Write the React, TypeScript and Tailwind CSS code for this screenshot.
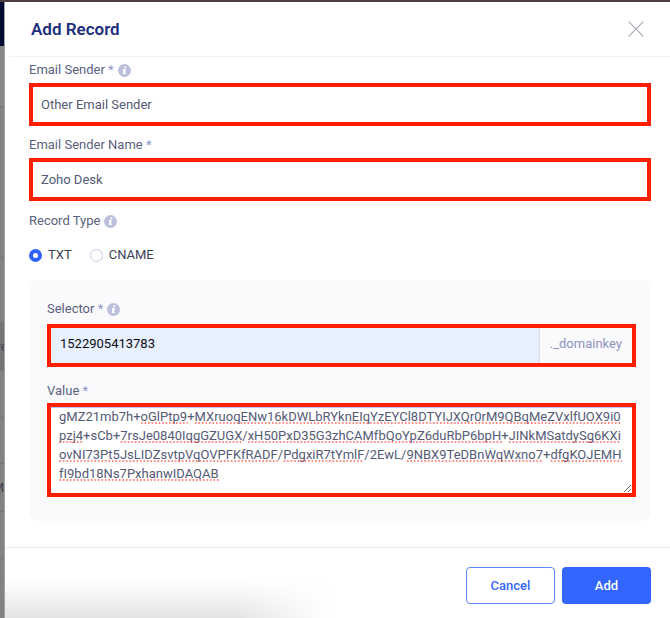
import { useEffect, useState } from "react";
import type { ReactNode } from "react";

const FONT = "13px Roboto, sans-serif";
const LINE_HEIGHT = 19;
const MARK_OFFSET = 16;

type Chunk = { text: string; flagged: boolean };

const ok = (text: string): Chunk => ({ text, flagged: false });
const bad = (text: string): Chunk => ({ text, flagged: true });

const KEY_LINES: Chunk[][] = [
  [ok("gMZ21mb7h+"), bad("oGlPtp9"), ok("+"), bad("MXruoqENw16kDWLbRYknEIqYzEYCl8DTYIJXQr0rM9QBqMeZVxlfUOX9i0")],
  [bad("pzj4"), ok("+sCb+"), bad("7rsJe0840IqgGZUGX"), ok("/"), bad("xH50PxD35G3zhCAMfbQoYpZ6duRbP6bpH"), ok("+"), bad("JINkMSatdySg6KXi")],
  [bad("ovNI73Pt5JsLIDZsvtpVqOVPFKfRADF"), ok("/"), bad("PdgxiR7tYmlF"), ok("/2EwL/"), bad("9NBX9TeDBnWqWxno7"), ok("+"), bad("dfgKOJEMH")],
  [bad("fI9bd18Ns7PxhanwIDAQAB")],
];

const KEY_TEXT = KEY_LINES.map((line) => line.map((c) => c.text).join("")).join("\n");

type Mark = { x1: number; x2: number; y: number };

function measureMarks(): Mark[] {
  const ctx = document.createElement("canvas").getContext("2d");
  if (!ctx) return [];
  ctx.font = FONT;
  const marks: Mark[] = [];
  KEY_LINES.forEach((line, row) => {
    let before = "";
    line.forEach((chunk) => {
      const x1 = ctx.measureText(before).width;
      before += chunk.text;
      if (chunk.flagged) {
        marks.push({ x1, x2: ctx.measureText(before).width, y: row * LINE_HEIGHT + MARK_OFFSET });
      }
    });
  });
  return marks;
}

function SpellingMarks() {
  const [marks, setMarks] = useState<Mark[]>([]);
  useEffect(() => setMarks(measureMarks()), []);
  return (
    <svg className="pointer-events-none absolute top-0 left-2 h-full w-full overflow-visible" aria-hidden="true">
      {marks.map((m) => (
        <line
          key={`${m.x1}-${m.y}`}
          x1={m.x1 + 1}
          x2={m.x2}
          y1={m.y}
          y2={m.y}
          stroke="#ff5b57"
          strokeWidth="1.5"
          strokeLinecap="round"
          strokeDasharray="0.5 3"
        />
      ))}
    </svg>
  );
}

function InfoIcon() {
  return (
    <svg viewBox="0 0 14 14" className="size-[13px]" aria-hidden="true">
      <circle cx="7" cy="7" r="7" fill="#bcc0dc" />
      <circle cx="7.9" cy="3.6" r="1.15" fill="#fff" />
      <path d="M5.5 5.5h3L7.7 9.6h.8v1.2H5l.8-4.1h-.7z" fill="#fff" />
    </svg>
  );
}

function FieldLabel({ id, required, info, children }: { id: string; required?: boolean; info?: boolean; children: ReactNode }) {
  return (
    <label htmlFor={id} className="flex h-5 items-center gap-1 text-[#5a5f7d]">
      <span>
        {children}
        {required && <span className="text-[#8e96c8]"> *</span>}
      </span>
      {info && <InfoIcon />}
    </label>
  );
}

const box = "border-4 border-[#ff1e00] bg-white";
const radio =
  "size-[13px] appearance-none rounded-full border border-[#c9cde8] bg-white checked:border-4 checked:border-[#2f62fb]";

function PageBehind() {
  return (
    <aside className="flex w-[5px] shrink-0 flex-col overflow-hidden border-r border-[#a4a4a6] bg-[#828282] text-[#3c3d4d]" aria-hidden="true">
      <div className="h-11 bg-[#000b33]" />
      <div className="h-[60px] bg-[#878787]" />
      <div className="h-[70px] border-t border-[#777]" />
      <div className="h-[82px] border-b border-[#747474]" />
      <div className="h-16" />
      <div className="flex h-[49px] items-center justify-center bg-[#757577]">re</div>
      <div className="h-[46px]" />
      <div className="h-[47px] border-y border-[#747484]" />
      <div className="flex h-12 items-center justify-end border-b border-[#747474]">M</div>
      <div className="h-[47px] border-b border-[#747474]" />
    </aside>
  );
}

export default function App() {
  return (
    <div className="flex min-h-screen border-t-2 border-[#4b3d40] bg-white font-[Roboto,sans-serif] text-[13px] leading-5 text-[#555a75]">
      <PageBehind />
      <form className="flex min-w-0 flex-1 flex-col" onSubmit={(e) => e.preventDefault()}>
        <header className="ml-1 flex h-[55px] items-center justify-between border-b border-[#f2f2f4] pr-[26px] pb-px pl-[22px]">
          <h1 className="text-[17px] font-semibold text-[#1b2f7e]">Add Record</h1>
          <button type="button" aria-label="Close">
            <svg viewBox="0 0 16 16" className="size-4" fill="none" stroke="#a5a7b8" strokeWidth="1.1">
              <path d="M.7.7l14.6 14.6M15.3.7L.7 15.3" />
            </svg>
          </button>
        </header>

        <main className="flex flex-1 flex-col pt-[3px] pr-[19px] pb-[26px] pl-6">
          <FieldLabel id="sender" required info>Email Sender</FieldLabel>
          <input id="sender" defaultValue="Other Email Sender" className={`mt-[3px] h-[43px] w-full px-2 outline-none ${box}`} />

          <div className="mt-[9px]">
            <FieldLabel id="name" required>Email Sender Name</FieldLabel>
          </div>
          <input id="name" defaultValue="Zoho Desk" className={`mt-[3px] h-[43px] w-full px-2 outline-none ${box}`} />

          <fieldset className="mt-[10px]">
            <legend className="flex h-5 items-center gap-1 text-[#5a5f7d]">
              Record Type <InfoIcon />
            </legend>
            <div className="mt-[14px] flex h-5 items-center gap-[18px] text-[#3b3f58]">
              <label className="flex items-center gap-[6px]">
                <input type="radio" name="type" defaultChecked className={radio} />
                TXT
              </label>
              <label className="flex items-center gap-[6px]">
                <input type="radio" name="type" className={radio} />
                CNAME
              </label>
            </div>
          </fieldset>

          <section className="mt-[15px] rounded-[10px] bg-[#fafafc] pt-[19px] pr-[15px] pb-6 pl-[18px]">
            <FieldLabel id="selector" required info>Selector</FieldLabel>
            <div className={`mt-[5px] flex h-[43px] ${box}`}>
              <input id="selector" defaultValue="1522905413783" className="min-w-0 flex-1 bg-[#e7f0fe] px-[9px] pb-1 text-[#0b0b12] outline-none" />
              <span className="flex items-center border-l border-[#dcdeea] bg-[#fafafc] px-[10px] pb-1 text-[#8f94bd]">._domainkey</span>
            </div>

            <div className="mt-[14px]">
              <FieldLabel id="value" required>Value</FieldLabel>
            </div>
            <div className={`relative mt-[2px] ${box}`}>
              <textarea
                id="value"
                wrap="off"
                spellCheck={false}
                defaultValue={KEY_TEXT}
                className="block h-[86px] w-full resize overflow-hidden px-2 leading-[19px] shadow-[inset_0_1px_0_#b5c6fb] outline-none"
              />
              <SpellingMarks />
            </div>
          </section>
        </main>

        <footer className="flex h-[71px] shrink-0 items-start justify-end gap-[7px] border-t border-[#e9e9ec] bg-[linear-gradient(to_right,transparent_230px,#fff_325px),linear-gradient(to_top,#e4e4e4,#fff_38px)] pt-[19px] pr-[19px]">
          <button type="button" className="h-[37px] w-[89px] rounded border border-[#5f86fb] bg-white font-medium text-[#3866f7]">Cancel</button>
          <button type="submit" className="h-[37px] w-[89px] rounded bg-[#3366ff] font-medium text-white">Add</button>
        </footer>
      </form>
    </div>
  );
}
